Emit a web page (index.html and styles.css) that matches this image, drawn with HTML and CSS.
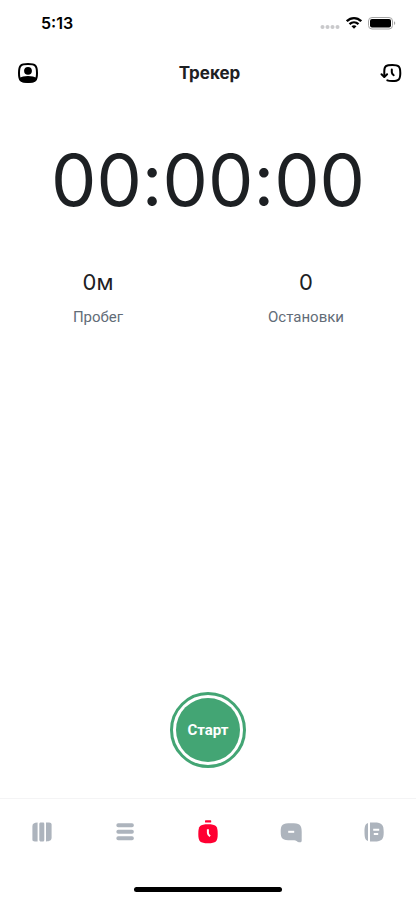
FILE: index.html
```html
<!DOCTYPE html>
<html lang="ru">
<head>
<meta charset="utf-8">
<meta name="viewport" content="width=device-width, initial-scale=1">
<title>Трекер</title>
<link rel="stylesheet" href="styles.css">
</head>
<body>
<div class="app">
  <div class="status">
    <time class="clock">5:13</time>
    <div class="indicators">
      <svg width="20" height="16" viewBox="0 0 20 16" fill="#c9c9cb" aria-hidden="true"><circle cx="2.5" cy="12" r="2"/><circle cx="7.5" cy="12" r="2"/><circle cx="12.500" cy="12" r="2"/><circle cx="17.500" cy="12" r="2"/></svg>
      <svg width="16" height="16" viewBox="0 0 16 16" fill="none" stroke="#000" stroke-width="2.300" aria-hidden="true"><path d="M.8 6.200C5 2 11 2 15.200 6.200"/><path d="M3.500 9.200c2.700-2.500 6.300-2.500 9 0"/><path d="M5.500 11.200c1.500-1.300 3.500-1.300 5 0L8 13.800z" fill="#000" stroke="none"/></svg>
      <svg width="28" height="16" viewBox="0 0 28 16" aria-hidden="true"><rect x=".5" y="2.500" width="24" height="11.500" rx="3.500" fill="none" stroke="#a5a5a5"/><rect x="2" y="4" width="21" height="8.500" rx="2"/><path d="M26 6.300c1.700.8 1.700 3 0 3.800z" fill="#a5a5a5"/></svg>
    </div>
  </div>
  <header class="header">
    <button class="icon-button" type="button" aria-label="Профиль">
      <svg width="22" height="22" viewBox="0 0 22 22" aria-hidden="true"><path d="M11 2c7.500 0 9 1.500 9 9s-1.500 9-9 9-9-1.500-9-9 1.500-9 9-9z" fill="none" stroke="#000" stroke-width="2"/><circle cx="11" cy="8.800" r="3.900"/><path d="M2 16c4.500-2.700 13.500-2.700 18 0-.8 4-3.500 4.800-9 4.800S2.800 20 2 16z"/></svg>
    </button>
    <h1 class="title">Трекер</h1>
    <button class="icon-button" type="button" aria-label="История">
      <svg width="22" height="22" viewBox="0 0 22 22" fill="none" stroke="#000" stroke-width="2" stroke-linecap="round" stroke-linejoin="round" aria-hidden="true"><path d="M4.300 14.500V9c0-5 1.700-6 8-6 6.500 0 8 1.500 8 8s-1.500 8-8 8c-2.200 0-3.800-.2-5-.7"/><path d="M1.500 12.200l2.800 2.800 2.800-2.800"/><path d="M11.800 7.500v2.800c0 1.200.6 1.900 1.900 2.900"/></svg>
    </button>
  </header>
  <main class="main">
    <div class="timer" role="timer">00:00:00</div>
    <dl class="stats">
      <div class="stat"><dt>Пробег</dt><dd>0м</dd></div>
      <div class="stat"><dt>Остановки</dt><dd>0</dd></div>
    </dl>
    <button class="start" type="button"><span class="start-face">Старт</span></button>
  </main>
  <nav class="tabs" aria-label="Разделы">
    <a class="tab" href="#map" aria-label="Карта"><svg width="24" height="24" viewBox="0 0 24 24" fill="currentColor" aria-hidden="true"><path d="M7.600 2.600v18.800c-1 .2-2.600.2-3.800-.1-1-.3-1.400-.9-1.400-1.900V6.200c0-2.400 1.800-3.600 5.200-3.600zM10.300 2.600h3.200c.5.300.8.700.8 1.300v16.200c0 .6-.3 1-.8 1.300h-3.200c-.7-.3-1-.7-1-1.300V3.900c0-.6.3-1 1-1.300zM16 2.600c1.400-.3 3-.2 4.200.1 1 .3 1.400.9 1.400 1.900v13.200c0 2.500-1.700 3.600-5.600 3.600z"/></svg></a>
    <a class="tab" href="#list" aria-label="Список"><svg width="24" height="24" viewBox="0 0 24 24" fill="currentColor" aria-hidden="true"><rect x="3.400" y="3.300" width="17.400" height="4" rx="1.800"/><rect x="3.400" y="9.800" width="17.400" height="4" rx="1.800"/><rect x="3.400" y="16.300" width="17.400" height="4" rx="1.800"/></svg></a>
    <a class="tab active" href="#tracker" aria-label="Трекер" aria-current="page"><svg width="24" height="24" viewBox="0 0 24 24" fill="currentColor" aria-hidden="true"><rect x="9" y=".3" width="6.200" height="2.200" rx=".6"/><path d="M12 4.200c8 0 9.700 1.700 9.700 9.500s-1.700 9.500-9.700 9.500-9.700-1.700-9.700-9.500S4 4.200 12 4.200z"/><path d="M11.900 9.200v3.700c0 1.400.7 2.200 2.200 3.400" fill="none" stroke="#fff" stroke-width="2"/></svg></a>
    <a class="tab" href="#chat" aria-label="Сообщения"><svg width="24" height="24" viewBox="0 0 24 24" fill="currentColor" aria-hidden="true"><path d="M12 3.200c8.600 0 10.700 1.300 10.700 8.500v8.800c0 1.600-1.100 2.200-3 1.700-1.700-.5-2.500-1.900-4.500-1.900H12C3.800 20.300 1.700 19 1.700 11.700S3.800 3.200 12 3.200z"/><path d="M9.200 11.800h6" fill="none" stroke="#fff" stroke-width="2"/></svg></a>
    <a class="tab" href="#journal" aria-label="Журнал"><svg width="24" height="24" viewBox="0 0 24 24" fill="currentColor" aria-hidden="true"><path d="M6 3v18c-2.800-1-3.500-3.500-3.500-9S3.200 4 6 3zM8 2.600c12-.8 13.700 1.400 13.700 9.400S20 22.200 8 21.400z"/><path d="M11.200 9.800h6M11.800 13.900h4.400" fill="none" stroke="#fff" stroke-width="2"/></svg></a>
  </nav>
  <div class="home"></div>
</div>
</body>
</html>
```
FILE: styles.css
```css
* {
  box-sizing: border-box;
}

body {
  margin: 0;
  background: #fff;
  color: #1d2023;
  font-family: Inter, "Liberation Sans", sans-serif;
}

button {
  padding: 0;
  border: 0;
  background: none;
  cursor: pointer;
}

svg {
  display: block;
}

.app {
  display: flex;
  flex-direction: column;
  min-height: 100vh;
}

.status {
  display: flex;
  align-items: center;
  justify-content: space-between;
  height: 46px;
  padding: 0 20px 0 41px;
}

.clock {
  color: #000;
  font-size: 16px;
  font-weight: 600;
}

.indicators {
  display: flex;
  gap: 6px;
}

.header {
  display: flex;
  align-items: center;
  justify-content: space-between;
  height: 54px;
  padding: 0 14px 0 17px;
}

.title {
  margin: 0;
  font-size: 17px;
  font-weight: 700;
}

.main {
  display: flex;
  flex: 1;
  flex-direction: column;
  padding-top: 40px;
}

.timer {
  font-size: 72px;
  font-variant-ligatures: no-contextual;
  line-height: 80px;
  text-align: center;
}

.stats {
  display: grid;
  grid-template-columns: 1fr 1fr;
  gap: 12px;
  margin: 46px 12px 0 0;
}

.stat {
  display: flex;
  flex-direction: column-reverse;
  gap: 8px;
  text-align: center;
}

.stat dt {
  color: #626c77;
  font-family: Roboto, sans-serif;
  font-size: 15px;
  line-height: 22px;
}

.stat dd {
  margin: 0;
  font-size: 22px;
  line-height: 32px;
}

.start {
  display: grid;
  width: 76px;
  height: 76px;
  margin: auto auto 30px;
  padding: 3px;
  border: 3px solid #43a574;
  border-radius: 50%;
}

.start-face {
  display: grid;
  place-items: center;
  border-radius: 50%;
  background: #43a574;
  color: #fff;
  font-family: Roboto, sans-serif;
  font-size: 15px;
  font-weight: 700;
}

.tabs {
  display: grid;
  grid-template-columns: repeat(5, 1fr);
  padding-top: 21px;
  border-top: 1px solid #f4f4f5;
}

.tab {
  display: grid;
  place-items: center;
  height: 24px;
  color: #adb4bd;
}

.active {
  color: #ff0032;
}

.home {
  width: 148px;
  height: 5px;
  margin: 43px auto 8px;
  border-radius: 3px;
  background: #000;
}
```
